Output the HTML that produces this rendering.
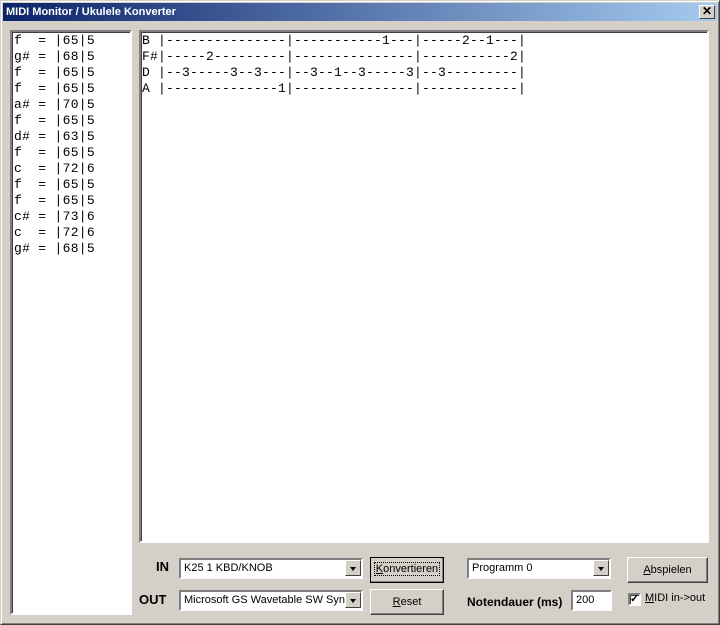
<!DOCTYPE html>
<html><head><meta charset="utf-8"><style>
*{box-sizing:border-box;margin:0;padding:0}
body{width:720px;height:625px;background:#d4d0c8;position:relative;overflow:hidden;font-family:"Liberation Sans",sans-serif;font-size:11px}
.win{position:absolute;left:0;top:0;width:720px;height:625px;border:1px solid;border-color:#d4d0c8 #404040 #404040 #d4d0c8;box-shadow:inset 1px 1px #fff,inset -1px -1px #808080}
.title{position:absolute;left:3px;top:3px;width:714px;height:18px;background:linear-gradient(to right,#0a246a,#a6caf0);color:#fff;font-weight:bold;font-size:11px;line-height:18px;padding-left:3px}
.xb{position:absolute;right:2px;top:2px;width:16px;height:14px;background:#d4d0c8;border:1px solid;border-color:#fff #404040 #404040 #fff;color:#000;font-size:12px;line-height:11px;text-align:center;font-weight:bold}
.sunk{position:absolute;background:#fff;border:2px solid;border-color:#808080 #fff #fff #808080;box-shadow:inset 1px 1px #404040}
.mono{font-family:"Liberation Mono",monospace;font-size:13px;line-height:16px;white-space:pre;color:#000;letter-spacing:0.15px}
.btn{position:absolute;background:#d4d0c8;border:1px solid;border-color:#fff #404040 #404040 #fff;box-shadow:inset -1px -1px #808080;text-align:center;font-size:11px;color:#000}
.combo{position:absolute;background:#fff;border:2px solid;border-color:#808080 #fff #fff #808080;font-size:11px;line-height:16px;padding-left:3px;white-space:nowrap;overflow:hidden}
.arr{position:absolute;right:0;top:0;width:16px;height:16px;background:#d4d0c8;border:1px solid;border-color:#fff #404040 #404040 #fff}
.arr:after{content:"";position:absolute;left:4px;top:6px;border:3.5px solid transparent;border-top:4px solid #000;border-bottom:0}
.lbl{position:absolute;font-weight:bold;font-size:13px}
</style></head><body>
<div class="win"></div>
<div class="title">MIDI Monitor / Ukulele Konverter<div class="xb">✕</div></div>
<div class="sunk mono" style="left:10px;top:30px;width:122px;height:585px;padding:1px 0 0 2px;letter-spacing:0.3px">f  = |65|5
g# = |68|5
f  = |65|5
f  = |65|5
a# = |70|5
f  = |65|5
d# = |63|5
f  = |65|5
c  = |72|6
f  = |65|5
f  = |65|5
c# = |73|6
c  = |72|6
g# = |68|5</div>
<div class="sunk mono" style="left:139px;top:30px;width:570px;height:513px;padding:1px 0 0 1px;letter-spacing:0.2px">B |---------------|-----------1---|-----2--1---|
F#|-----2---------|---------------|-----------2|
D |--3-----3--3---|--3--1--3-----3|--3---------|
A |--------------1|---------------|------------|</div>
<div class="lbl" style="left:156px;top:559px">IN</div>
<div class="lbl" style="left:139px;top:592px">OUT</div>
<div class="combo" style="left:179px;top:558px;width:184px;height:21px">K25 1 KBD/KNOB<div class="arr"></div></div>
<div class="combo" style="left:179px;top:590px;width:184px;height:21px">Microsoft GS Wavetable SW Synth<div class="arr"></div></div>
<div class="btn" style="left:370px;top:557px;width:74px;height:26px;border-color:#000;line-height:22px"><span style="outline:1px dotted #000;padding:0 1px"><u>K</u>onvertieren</span></div>
<div class="btn" style="left:370px;top:589px;width:74px;height:26px;line-height:24px"><u>R</u>eset</div>
<div class="combo" style="left:467px;top:558px;width:144px;height:21px">Programm 0<div class="arr"></div></div>
<div class="lbl" style="left:467px;top:595px;font-size:12px">Notendauer (ms)</div>
<div class="combo" style="left:571px;top:590px;width:41px;height:21px">200</div>
<div class="btn" style="left:627px;top:557px;width:81px;height:26px;line-height:24px"><u>A</u>bspielen</div>
<div class="sunk" style="left:628px;top:593px;width:13px;height:13px;font-size:11px;line-height:9px;text-align:center;font-weight:bold">✓</div>
<div style="position:absolute;left:645px;top:592px;font-size:11px"><u>M</u>IDI in-&gt;out</div>
</body></html>
